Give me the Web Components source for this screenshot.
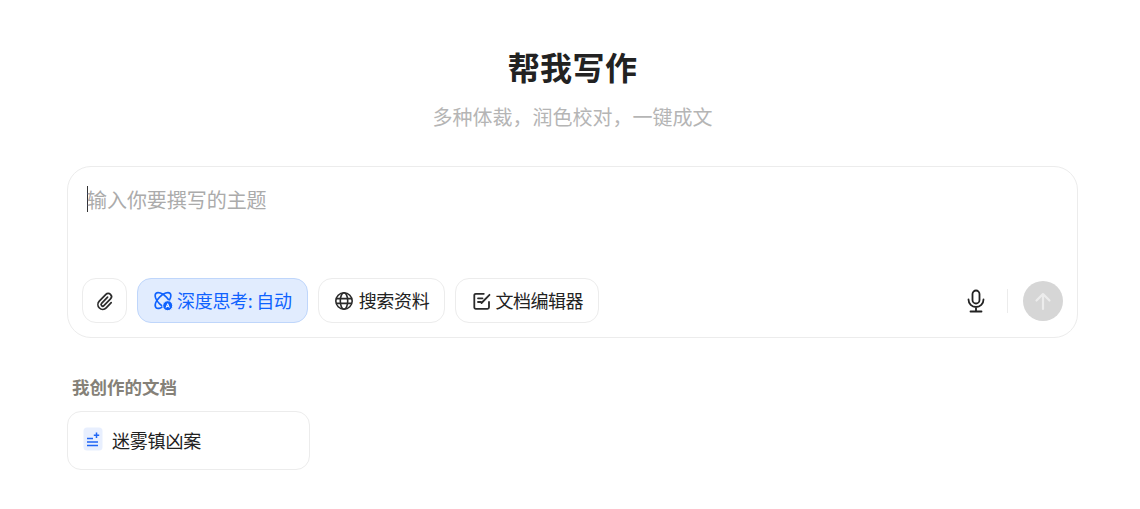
<!DOCTYPE html>
<html lang="zh">
<head>
<meta charset="utf-8">
<title>帮我写作</title>
<style>
  html, body { margin: 0; background: #fff; }
  body {
    font-family: "Noto Sans CJK SC", "Liberation Sans", sans-serif;
    color: #222;
    overflow: hidden;
  }
</style>
</head>
<body>
<writing-page>
  <page-header slot="header" title="帮我写作" subtitle="多种体裁，润色校对，一键成文"></page-header>
  <prompt-box slot="prompt" placeholder="输入你要撰写的主题">
    <tool-button slot="tools" square>
      <svg slot="icon" width="20" height="20" viewBox="0 0 20 20" fill="none" stroke="#2b2b2b" stroke-width="1.7" stroke-linecap="round" stroke-linejoin="round"><path d="M12.600 6.200 6.600 12.400a1.600 1.600 0 0 0 2.300 2.300l6.600-6.800a3.200 3.200 0 0 0-4.600-4.500L4.300 10.200a4.800 4.800 0 0 0 6.900 6.700l5-5.200"/></svg>
    </tool-button>
    <tool-button slot="tools" active label="深度思考: 自动">
      <svg slot="icon" width="20" height="20" viewBox="0 0 20 20" fill="none" stroke="#0f62fe" stroke-width="1.600"><ellipse cx="10" cy="9.500" rx="10" ry="4.800" transform="rotate(45 10 9.500)"/><ellipse cx="10" cy="9.500" rx="10" ry="4.800" transform="rotate(-45 10 9.500)"/><circle cx="14.700" cy="14.700" r="5" fill="#0f62fe" stroke="#e1ecfe" stroke-width="1"/><path d="m13.100 16.700 1.600-4 1.600 4m-2.600-1.300h2" stroke="#fff" stroke-width="1"/></svg>
    </tool-button>
    <tool-button slot="tools" label="搜索资料" wide>
      <svg slot="icon" width="20" height="20" viewBox="0 0 20 20" fill="none" stroke="#2b2b2b" stroke-width="1.600"><circle cx="10" cy="10" r="8.200"/><ellipse cx="10" cy="10" rx="3.700" ry="8.200"/><path d="M2.300 7.600h15.400M2.300 12.400h15.400"/></svg>
    </tool-button>
    <tool-button slot="tools" label="文档编辑器" tight>
      <svg slot="icon" width="20" height="20" viewBox="0 0 20 20" fill="none" stroke="#2b2b2b" stroke-width="1.800" stroke-linecap="round" stroke-linejoin="round"><path d="M17 11v5.300a1.500 1.500 0 0 1-1.500 1.500H3.800a1.500 1.500 0 0 1-1.500-1.500V4.300a1.500 1.500 0 0 1 1.500-1.500h8"/><path d="M6 7.300h4.500M6 11h3M9.500 12l8-8.200"/></svg>
    </tool-button>
  </prompt-box>
  <doc-list slot="docs" heading="我创作的文档">
    <doc-card title="迷雾镇凶案"></doc-card>
  </doc-list>
</writing-page>

<script>
class WritingPage extends HTMLElement {
  constructor() {
    super();
    this.attachShadow({ mode: 'open' });
    this.shadowRoot.innerHTML = `
      <style>
        :host {
          display: flex;
          flex-direction: column;
          box-sizing: border-box;
          width: 1140px;
          height: 509px;
          padding: 44px 62px 0 67px;
        }
      </style>
      <slot name="header"></slot>
      <slot name="prompt"></slot>
      <slot name="docs"></slot>
    `;
  }
}

class PageHeader extends HTMLElement {
  constructor() {
    super();
    this.attachShadow({ mode: 'open' });
    this.shadowRoot.innerHTML = `
      <style>
        :host {
          display: flex;
          flex-direction: column;
          align-items: center;
          height: 122px;
        }
        h1 {
          margin: 0;
          font-size: 32px;
          line-height: 44px;
          font-weight: 700;
          letter-spacing: 0.4px;
          color: #222;
        }
        p {
          margin: 15px 0 0;
          font-size: 20px;
          line-height: 28px;
          color: #b5b5b5;
        }
      </style>
      <h1></h1>
      <p></p>
    `;
    this.shadowRoot.querySelector('h1').textContent = this.getAttribute('title');
    this.shadowRoot.querySelector('p').textContent = this.getAttribute('subtitle');
    this.removeAttribute('title');
  }
}

class PromptBox extends HTMLElement {
  constructor() {
    super();
    this.attachShadow({ mode: 'open' });
    this.shadowRoot.innerHTML = `
      <style>
        :host {
          display: flex;
          flex-direction: column;
          justify-content: space-between;
          box-sizing: border-box;
          height: 172px;
          padding: 19px 14px 14px;
          border: 1px solid #ececec;
          border-radius: 24px;
          background: #fff;
        }
        .input {
          display: flex;
          align-items: center;
          height: 28px;
          padding-left: 5px;
          font-size: 20px;
          line-height: 28px;
          letter-spacing: -0.05px;
          color: #ababab;
        }
        .caret {
          flex: none;
          width: 1px;
          height: 26px;
          margin: -2px -1px 0 0;
          background: #333;
        }
        .bar {
          display: flex;
          align-items: center;
        }
        .tools {
          display: flex;
          gap: 10px;
        }
        .actions {
          display: flex;
          align-items: center;
          margin-left: auto;
        }
        .mic {
          display: flex;
          margin-right: 20px;
        }
        .sep {
          width: 1px;
          height: 24px;
          margin-right: 15px;
          background: #ececec;
        }
        .send {
          display: flex;
          align-items: center;
          justify-content: center;
          width: 40px;
          height: 40px;
          border-radius: 50%;
          background: #d6d6d6;
        }
      </style>
      <div class="input"><span class="caret"></span><span class="placeholder"></span></div>
      <div class="bar">
        <div class="tools"><slot name="tools"></slot></div>
        <div class="actions">
          <span class="mic">
            <svg width="22" height="24" viewBox="0 0 22 24" fill="none" stroke="#222" stroke-width="1.800" stroke-linecap="round"><rect x="7.500" y="1.500" width="7" height="13" rx="3.500"/><path d="M3.500 10.500a7.500 7.500 0 0 0 15 0M11 18v4M5.500 22.500h11"/></svg>
          </span>
          <span class="sep"></span>
          <span class="send">
            <svg width="20" height="20" viewBox="0 0 20 20" fill="none" stroke="#ececec" stroke-width="2.200" stroke-linecap="round" stroke-linejoin="round"><path d="M10 18V3M3.500 9.500 10 3l6.500 6.500"/></svg>
          </span>
        </div>
      </div>
    `;
    this.shadowRoot.querySelector('.placeholder').textContent = this.getAttribute('placeholder');
  }
}

class ToolButton extends HTMLElement {
  constructor() {
    super();
    this.attachShadow({ mode: 'open' });
    this.shadowRoot.innerHTML = `
      <style>
        :host {
          display: inline-flex;
          align-items: center;
          gap: 4px;
          box-sizing: border-box;
          height: 45px;
          padding: 0 15px 0 16px;
          border: 1px solid #ececec;
          border-radius: 14px;
          background: #fff;
          font-size: 18px;
          line-height: 26px;
          letter-spacing: -0.3px;
          color: #222;
        }
        :host([square]) {
          width: 45px;
          padding: 0;
          justify-content: center;
        }
        :host([active]) {
          padding: 0 15px;
          background: #e1ecfe;
          border-color: #bfd6fb;
          color: #0f62fe;
        }
        :host([wide]) {
          gap: 5px;
          padding: 0 15px;
        }
        :host([tight]) {
          gap: 3px;
          letter-spacing: -0.5px;
        }
        ::slotted(svg) {
          display: block;
          flex: none;
        }
        span {
          padding-bottom: 2px;
        }
      </style>
      <slot name="icon"></slot>
      <span></span>
    `;
    const label = this.getAttribute('label');
    const span = this.shadowRoot.querySelector('span');
    if (label) span.textContent = label;
    else span.remove();
  }
}

class DocList extends HTMLElement {
  constructor() {
    super();
    this.attachShadow({ mode: 'open' });
    this.shadowRoot.innerHTML = `
      <style>
        :host {
          display: flex;
          flex-direction: column;
          align-items: flex-start;
          margin-top: 36px;
        }
        h2 {
          margin: 0 0 11px 5px;
          font-size: 17.500px;
          line-height: 26px;
          font-weight: 700;
          color: #858178;
        }
      </style>
      <h2></h2>
      <slot></slot>
    `;
    this.shadowRoot.querySelector('h2').textContent = this.getAttribute('heading');
  }
}

class DocCard extends HTMLElement {
  constructor() {
    super();
    this.attachShadow({ mode: 'open' });
    this.shadowRoot.innerHTML = `
      <style>
        :host {
          display: flex;
          align-items: center;
          gap: 9px;
          box-sizing: border-box;
          width: 243px;
          height: 59px;
          padding: 0 15px;
          border: 1px solid #ececec;
          border-radius: 14px;
          background: #fff;
          font-size: 18px;
          line-height: 26px;
          letter-spacing: -0.2px;
          color: #222;
        }
        svg {
          display: block;
          flex: none;
          margin-top: -3px;
        }
        span {
          padding-bottom: 2px;
        }
      </style>
      <svg width="20" height="24" viewBox="0 0 20 24" fill="none">
        <rect x="0.500" y="0.500" width="19" height="23" rx="3.500" fill="#e8effe"/>
        <path d="M4 11.500h6M4 15h11M4 18.500h11" stroke="#1f66f5" stroke-width="1.700"/>
        <path d="M13.500 5.500v5.500M10.800 8.200h5.400" stroke="#1f66f5" stroke-width="1.500"/>
      </svg>
      <span></span>
    `;
    this.shadowRoot.querySelector('span').textContent = this.getAttribute('title');
    this.removeAttribute('title');
  }
}

customElements.define('writing-page', WritingPage);
customElements.define('page-header', PageHeader);
customElements.define('prompt-box', PromptBox);
customElements.define('tool-button', ToolButton);
customElements.define('doc-list', DocList);
customElements.define('doc-card', DocCard);
</script>
</body>
</html>
